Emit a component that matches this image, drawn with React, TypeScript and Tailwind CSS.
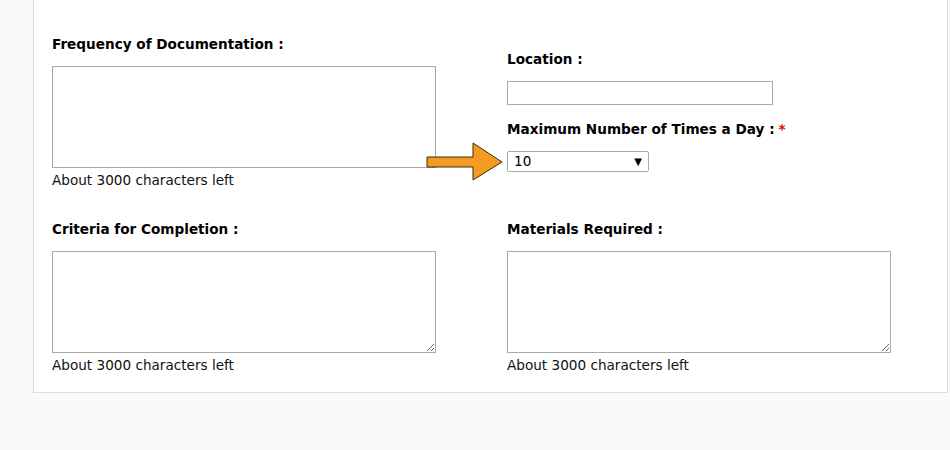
import React from 'react';

const FONT = { fontFamily: '"DejaVu Sans", Verdana, sans-serif' };

function Label({ children, required }: { children: React.ReactNode; required?: boolean }) {
  return (
    <div className="text-[13.6px] leading-4 font-bold text-black">
      {children}
      {required ? <span className="ml-1 text-[#e00]">*</span> : null}
    </div>
  );
}

function Counter() {
  return <div className="text-[13.6px] leading-4 text-[#111]">About 3000 characters left</div>;
}

function Area({ grip = true }: { grip?: boolean }) {
  return (
    <textarea
      readOnly
      className={`block h-[102px] w-[384px] border border-[#a9a9a9] bg-white outline-none ${
        grip ? 'resize' : 'resize-none'
      }`}
    />
  );
}

function Arrow() {
  return (
    <svg
      className="absolute left-[426px] top-[142px]"
      width="78"
      height="40"
      viewBox="0 0 78 40"
    >
      <path
        d="M1 15 H47 V1 L76 20 L47 38 V25 H1 Z"
        fill="#f39c1f"
        stroke="#3a2a10"
        strokeWidth="1"
        strokeLinejoin="miter"
      />
    </svg>
  );
}

export default function App() {
  return (
    <div className="relative h-[450px] w-[950px] overflow-hidden bg-[#fafafa]" style={FONT}>
      <div className="ml-[33px] w-[915px] border border-t-0 border-[#dcdcdc] bg-white pb-[19px] pl-[18px]">
        {/* tail of the row above, scrolled mostly out of view */}
        <div className="grid h-[4px] grid-cols-[455px_1fr] overflow-hidden">
          <div className="-mt-[13px] text-[13.6px] leading-4 text-[#f4f5ef]">About 3000 characters left</div>
          <div className="-mt-[13px] text-[13.6px] leading-4 text-[#f4f5ef]">About 3000 characters left</div>
        </div>

        <div className="grid grid-cols-[455px_1fr]">
          <div className="pt-[32px]">
            <Label>Frequency of Documentation :</Label>
            <div className="mt-[14px]">
              <Area grip={false} />
            </div>
            <div className="mt-[4px]">
              <Counter />
            </div>
          </div>
          <div className="pt-[47px]">
            <Label>Location :</Label>
            <input
              readOnly
              className="mt-[14px] block h-[24px] w-[266px] border border-[#a9a9a9] bg-white outline-none"
            />
            <div className="mt-[16px]">
              <Label required>Maximum Number of Times a Day :</Label>
            </div>
            <div className="mt-[14px] flex h-[21px] w-[142px] items-center justify-between rounded-[2px] border border-[#a9a9a9] bg-white pl-[6px] pr-[6px] text-[13.6px] text-black">
              <span>10</span>
              <span className="text-[10px]">▼</span>
            </div>
          </div>
        </div>

        <div className="mt-[33px] grid grid-cols-[455px_1fr]">
          <div>
            <Label>Criteria for Completion :</Label>
            <div className="mt-[14px]">
              <Area />
            </div>
            <div className="mt-[4px]">
              <Counter />
            </div>
          </div>
          <div>
            <Label>Materials Required :</Label>
            <div className="mt-[14px]">
              <Area />
            </div>
            <div className="mt-[4px]">
              <Counter />
            </div>
          </div>
        </div>
      </div>
      <Arrow />
    </div>
  );
}
